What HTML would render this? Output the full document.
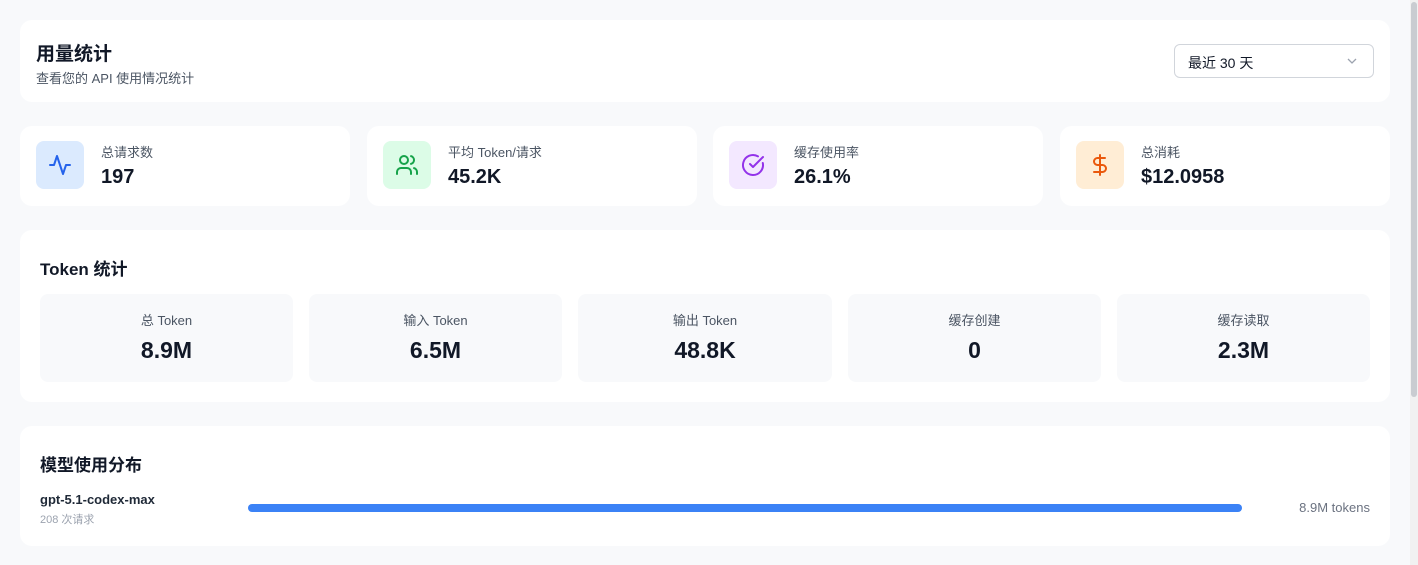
<!DOCTYPE html>
<html><head><meta charset="utf-8"><style>
*{margin:0;padding:0;box-sizing:border-box}
body{width:1418px;height:565px;background:#f8f9fb;font-family:"Liberation Sans","Noto Sans CJK SC",sans-serif;color:#111827;position:relative;overflow:hidden}
.card{position:absolute;background:#fff;border-radius:12px}
.sb{position:absolute;left:1410px;top:0;width:8px;height:565px;background:#f1f1f1}
.sb div{position:absolute;left:1px;top:2px;width:6px;height:395px;background:#c9ccd1;border-radius:3px}
.ic{position:absolute;left:16px;top:15px;width:48px;height:48px;border-radius:8px;display:flex;align-items:center;justify-content:center}
.lbl{position:absolute;left:81px;top:16px;font-size:13px;color:#4b5563}
.val{position:absolute;left:81px;top:40px;font-size:20px;font-weight:bold;color:#111827}
.tb{position:absolute;top:64px;width:253px;height:88px;background:#f8f9fb;border-radius:8px;text-align:center}
.tb .l{margin-top:16px;font-size:13px;color:#4b5563}
.tb .v{margin-top:8px;font-size:23px;font-weight:bold}
</style></head><body>
<div class="card" style="left:20px;top:20px;width:1370px;height:82px">
 <div style="position:absolute;left:16px;top:19px;font-size:19px;font-weight:bold">用量统计</div>
 <div style="position:absolute;left:16px;top:48px;font-size:13px;color:#4b5563">查看您的 API 使用情况统计</div>
 <div style="position:absolute;left:1154px;top:24px;width:200px;height:34px;border:1px solid #d1d5db;border-radius:6px">
  <div style="position:absolute;left:13px;top:8px;font-size:14px">最近 30 天</div>
  <svg style="position:absolute;left:172px;top:12px" width="10" height="8" viewBox="0 0 10 8"><path d="M1 2l4 4 4-4" fill="none" stroke="#9ca3af" stroke-width="1.3"/></svg>
 </div>
</div>

<div class="card" style="left:20px;top:126px;width:330px;height:80px">
 <div class="ic" style="background:#dbeafe"><svg width="24" height="24" viewBox="0 0 24 24" fill="none" stroke="#2563eb" stroke-width="2" stroke-linecap="round" stroke-linejoin="round"><path d="M22 12h-4l-3 9L9 3l-3 9H2"/></svg></div>
 <div class="lbl">总请求数</div><div class="val">197</div>
</div>
<div class="card" style="left:367px;top:126px;width:330px;height:80px">
 <div class="ic" style="background:#dcfce7"><svg width="24" height="24" viewBox="0 0 24 24" fill="none" stroke="#16a34a" stroke-width="2" stroke-linecap="round" stroke-linejoin="round"><path d="M16 21v-2a4 4 0 0 0-4-4H6a4 4 0 0 0-4 4v2"/><circle cx="9" cy="7" r="4"/><path d="M22 21v-2a4 4 0 0 0-3-3.87M16 3.13a4 4 0 0 1 0 7.75"/></svg></div>
 <div class="lbl">平均 Token/请求</div><div class="val">45.2K</div>
</div>
<div class="card" style="left:713px;top:126px;width:330px;height:80px">
 <div class="ic" style="background:#f3e8ff"><svg width="24" height="24" viewBox="0 0 24 24" fill="none" stroke="#9333ea" stroke-width="2" stroke-linecap="round" stroke-linejoin="round"><path d="M21.8 10A10 10 0 1 1 17 3.34"/><path d="m9 11 3 3L22 4"/></svg></div>
 <div class="lbl">缓存使用率</div><div class="val">26.1%</div>
</div>
<div class="card" style="left:1060px;top:126px;width:330px;height:80px">
 <div class="ic" style="background:#ffedd5"><svg width="24" height="24" viewBox="0 0 24 24" fill="none" stroke="#ea580c" stroke-width="2" stroke-linecap="round" stroke-linejoin="round"><path d="M12 2v20M17 5H9.5a3.5 3.5 0 0 0 0 7h5a3.5 3.5 0 0 1 0 7H6"/></svg></div>
 <div class="lbl">总消耗</div><div class="val">$12.0958</div>
</div>

<div class="card" style="left:20px;top:230px;width:1370px;height:172px">
 <div style="position:absolute;left:20px;top:25px;font-size:17px;font-weight:bold">Token 统计</div>
 <div class="tb" style="left:20px"><div class="l">总 Token</div><div class="v">8.9M</div></div>
 <div class="tb" style="left:289px"><div class="l">输入 Token</div><div class="v">6.5M</div></div>
 <div class="tb" style="left:558px;width:254px"><div class="l">输出 Token</div><div class="v">48.8K</div></div>
 <div class="tb" style="left:828px"><div class="l">缓存创建</div><div class="v">0</div></div>
 <div class="tb" style="left:1097px"><div class="l">缓存读取</div><div class="v">2.3M</div></div>
</div>

<div class="card" style="left:20px;top:426px;width:1370px;height:120px">
 <div style="position:absolute;left:20px;top:25px;font-size:17px;font-weight:bold">模型使用分布</div>
 <div style="position:absolute;left:20px;top:66px;font-size:13px;font-weight:bold;color:#1f2937">gpt-5.1-codex-max</div>
 <div style="position:absolute;left:20px;top:85px;font-size:11px;color:#9ca3af">208 次请求</div>
 <div style="position:absolute;left:228px;top:78px;width:994px;height:8px;background:#3b82f6;border-radius:4px"></div>
 <div style="position:absolute;right:20px;top:74px;font-size:13px;color:#6b7280">8.9M tokens</div>
</div>
<div class="sb"><div></div></div>
</body></html>
